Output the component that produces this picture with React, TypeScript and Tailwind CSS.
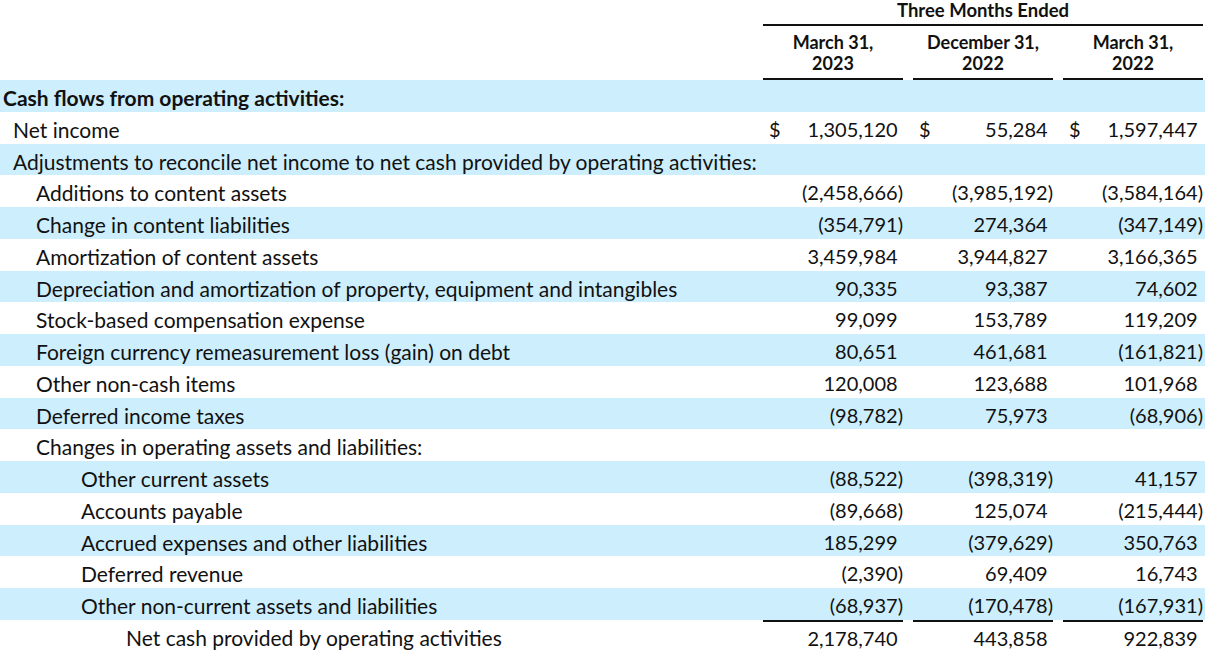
const rows: {
  label: string;
  indent: string;
  bold?: boolean;
  dollar?: boolean;
  total?: boolean;
  values?: string[];
}[] = [
  { label: "Cash flows from operating activities:", indent: "pl-[3px]", bold: true },
  { label: "Net income", indent: "pl-[13px]", dollar: true, values: ["1,305,120", "55,284", "1,597,447"] },
  { label: "Adjustments to reconcile net income to net cash provided by operating activities:", indent: "pl-[13px]" },
  { label: "Additions to content assets", indent: "pl-[36px]", values: ["(2,458,666)", "(3,985,192)", "(3,584,164)"] },
  { label: "Change in content liabilities", indent: "pl-[36px]", values: ["(354,791)", "274,364", "(347,149)"] },
  { label: "Amortization of content assets", indent: "pl-[36px]", values: ["3,459,984", "3,944,827", "3,166,365"] },
  { label: "Depreciation and amortization of property, equipment and intangibles", indent: "pl-[36px]", values: ["90,335", "93,387", "74,602"] },
  { label: "Stock-based compensation expense", indent: "pl-[36px]", values: ["99,099", "153,789", "119,209"] },
  { label: "Foreign currency remeasurement loss (gain) on debt", indent: "pl-[36px]", values: ["80,651", "461,681", "(161,821)"] },
  { label: "Other non-cash items", indent: "pl-[36px]", values: ["120,008", "123,688", "101,968"] },
  { label: "Deferred income taxes", indent: "pl-[36px]", values: ["(98,782)", "75,973", "(68,906)"] },
  { label: "Changes in operating assets and liabilities:", indent: "pl-[36px]" },
  { label: "Other current assets", indent: "pl-[81px]", values: ["(88,522)", "(398,319)", "41,157"] },
  { label: "Accounts payable", indent: "pl-[81px]", values: ["(89,668)", "125,074", "(215,444)"] },
  { label: "Accrued expenses and other liabilities", indent: "pl-[81px]", values: ["185,299", "(379,629)", "350,763"] },
  { label: "Deferred revenue", indent: "pl-[81px]", values: ["(2,390)", "69,409", "16,743"] },
  { label: "Other non-current assets and liabilities", indent: "pl-[81px]", values: ["(68,937)", "(170,478)", "(167,931)"] },
  { label: "Net cash provided by operating activities", indent: "pl-[126px]", total: true, values: ["2,178,740", "443,858", "922,839"] },
];

const headers = [
  ["March 31,", "2023"],
  ["December 31,", "2022"],
  ["March 31,", "2022"],
];

function Amount({ value }: { value: string }) {
  if (value.startsWith("(")) return <span>{value}</span>;
  return (
    <span>
      {value}
      <span className="invisible">)</span>
    </span>
  );
}

export default function App() {
  return (
    <div
      className="w-[1205px] h-[651px] overflow-hidden bg-white text-[#111]"
      style={{ fontFamily: "Lato, 'Liberation Sans', sans-serif" }}
    >
      {/* header */}
      <div className="flex pr-[2px]">
        <div className="flex-1" />
        <div className="w-[440px]">
          <div className="h-[24px] text-center text-[18.5px] font-bold leading-[21px]">Three Months Ended</div>
          <div className="h-[2px] bg-[#111]" />
          <div className="flex gap-[10px]">
            {headers.map((h, i) => (
              <div key={i} className="w-[140px]">
                <div className="h-[51.5px] pt-[6px] text-center text-[18px] font-bold leading-[21px]">
                  <div>{h[0]}</div>
                  <div>{h[1]}</div>
                </div>
                <div className="h-[2.5px] bg-[#111]" />
              </div>
            ))}
          </div>
        </div>
      </div>

      {/* body */}
      {rows.map((r, i) => (
        <div
          key={i}
          className={`flex h-[31.75px] pr-[2px] pt-[2px] leading-[31.75px] whitespace-nowrap ${
            i % 2 === 0 ? "bg-[#cdeefc]" : ""
          }`}
        >
          <div className={`flex-1 text-[21px] ${r.indent} ${r.bold ? "font-bold" : ""}`}>{r.label}</div>
          {[0, 1, 2].map((c) => (
            <div
              key={c}
              className={`flex w-[140px] justify-between pl-[6px] text-[20px] ${c === 0 ? "" : "ml-[10px]"} ${
                r.total ? "-mt-[2px] border-t-2 border-[#111] pt-[2px] leading-[29.75px]" : ""
              }`}
            >
              <span>{r.dollar ? "$" : ""}</span>
              {r.values ? <Amount value={r.values[c]} /> : null}
            </div>
          ))}
        </div>
      ))}
    </div>
  );
}
